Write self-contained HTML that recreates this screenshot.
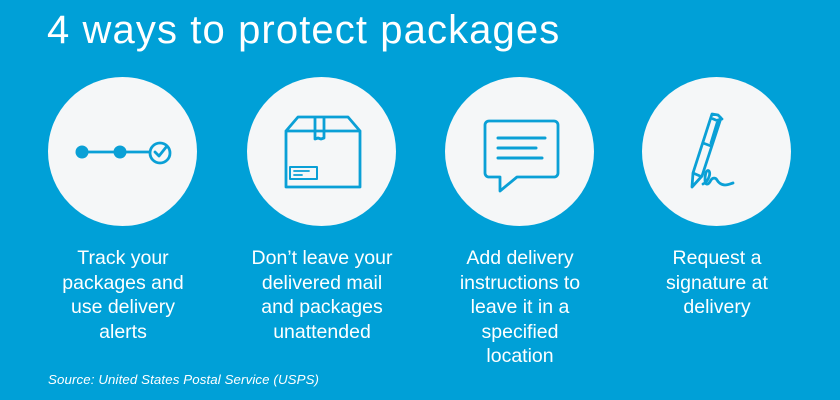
<!DOCTYPE html>
<html><head><style>
body{margin:0;width:840px;height:400px;background:#00a0d7;overflow:hidden;font-family:"Liberation Sans",sans-serif;color:#fff;position:relative}
h1{position:absolute;left:47px;top:8px;margin:0;font-weight:normal;font-size:40px;letter-spacing:1.1px}
.c{position:absolute;top:77px;width:149px;height:149px;border-radius:50%;background:#f5f7f8}
.t{position:absolute;top:246px;width:200px;text-align:center;font-size:19.5px;line-height:24.5px}
.s{position:absolute;left:48px;top:372px;font-size:13.3px;font-style:italic;letter-spacing:0.1px}
svg{position:absolute;left:0;top:0}
</style></head><body>
<h1>4 ways to protect packages</h1>
<div class="c" style="left:48px"></div>
<div class="c" style="left:247px"></div>
<div class="c" style="left:445px"></div>
<div class="c" style="left:642px"></div>
<svg width="840" height="400" fill="none" stroke="#0aa0d6" stroke-width="2.8" stroke-linecap="round" stroke-linejoin="round">
<line x1="82" y1="152" x2="150" y2="152"/>
<circle cx="82" cy="152" r="6.5" fill="#0aa0d6" stroke="none"/>
<circle cx="120" cy="152" r="6.5" fill="#0aa0d6" stroke="none"/>
<circle cx="160" cy="153" r="10" fill="#f5f7f8"/>
<path d="M155 152l4 4 8-10"/>
<path d="M286 131h74v56h-74zM286 131l12-14h50l12 14M315 117v22l3-1 3 1 3-1v-21"/>
<rect x="290" y="167" width="27" height="12" stroke-width="2"/>
<line x1="294" y1="171" x2="309" y2="171" stroke-width="1.8"/><line x1="294" y1="175" x2="302" y2="175" stroke-width="1.8"/>
<path d="M489 121h65a4 4 0 0 1 4 4v48a4 4 0 0 1-4 4h-37l-17 14v-14h-11a4 4 0 0 1-4-4v-48a4 4 0 0 1 4-4z"/>
<line x1="498" y1="138" x2="545" y2="138" stroke-width="3"/><line x1="498" y1="148" x2="536" y2="148" stroke-width="3"/><line x1="498" y1="158" x2="542" y2="158" stroke-width="3"/>
<path d="M692 187l1-14 19-59 6 1 3 3-19 58zM693 173l7 3M711 118l7 3M703 143l8 3M722 119l-4 1-7 23"/>
<path d="M703 184c5-2 8-10 6-13-3-2-4 4-4 9s3 6 6 0c2-3 5-2 6 0s4 5 8 5c3 0 5-1 8-2"/>
</svg>
<div class="t" style="left:23px">Track your<br>packages and<br>use delivery<br>alerts</div>
<div class="t" style="left:222px">Don’t leave your<br>delivered mail<br>and packages<br>unattended</div>
<div class="t" style="left:420px">Add delivery<br>instructions to<br>leave it in a<br>specified<br>location</div>
<div class="t" style="left:617px">Request a<br>signature at<br>delivery</div>
<div class="s">Source: United States Postal Service (USPS)</div>
</body></html>
